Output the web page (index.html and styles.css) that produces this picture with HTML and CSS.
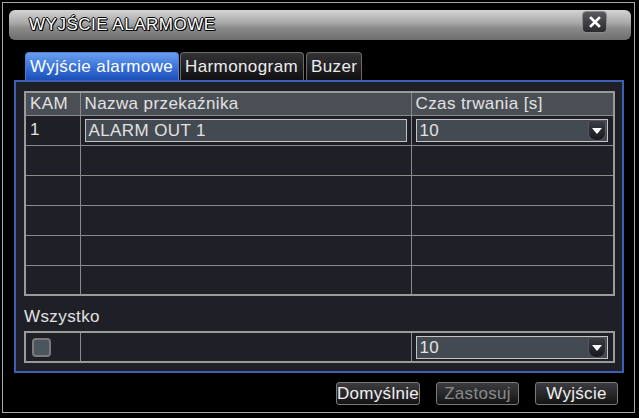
FILE: index.html
```html
<!DOCTYPE html>
<html lang="pl">
<head>
  <meta charset="UTF-8" />
  <title>Wyjście alarmowe</title>
  <link rel="stylesheet" href="styles.css">
</head>
<body>
  <div class="frame">
    <div class="titlebar">
      <span class="title">WYJŚCIE ALARMOWE</span>
      <button class="close">
        <svg width="12" height="12" viewBox="0 0 12 12"><path d="M2 2 L10 10 M10 2 L2 10" stroke="#fff" stroke-width="2.6" stroke-linecap="square"/></svg>
      </button>
    </div>

    <div class="tabs">
      <div class="tab active">Wyjście alarmowe</div>
      <div class="tab">Harmonogram</div>
      <div class="tab">Buzer</div>
    </div>

    <div class="panel">
      <table class="grid">
        <colgroup><col class="c1"><col class="c2"><col class="c3"></colgroup>
        <tr class="head"><th>KAM</th><th>Nazwa przekaźnika</th><th>Czas trwania [s]</th></tr>
        <tr>
          <td>1</td>
          <td><div class="field">ALARM OUT 1</div></td>
          <td><div class="select">10<span class="drop"></span></div></td>
        </tr>
        <tr><td></td><td></td><td></td></tr>
        <tr><td></td><td></td><td></td></tr>
        <tr><td></td><td></td><td></td></tr>
        <tr><td></td><td></td><td></td></tr>
        <tr><td></td><td></td><td></td></tr>
      </table>

      <div class="label">Wszystko</div>

      <table class="grid all">
        <colgroup><col class="c1"><col class="c2"><col class="c3"></colgroup>
        <tr>
          <td><span class="check"></span></td>
          <td></td>
          <td><div class="select">10<span class="drop"></span></div></td>
        </tr>
      </table>
    </div>

    <div class="buttons">
      <button class="btn">Domyślnie</button>
      <button class="btn disabled">Zastosuj</button>
      <button class="btn">Wyjście</button>
    </div>
  </div>
</body>
</html>
```

FILE: styles.css
```css
* { box-sizing: border-box; }
body {
  margin: 0;
  background: #000;
  color: #e2e2e2;
  font-family: "Liberation Sans", Arial, sans-serif;
  font-size: 17px;
  letter-spacing: 0.4px;
}
.frame {
  margin: 2px 0 0 2px;
  width: 633px;
  height: 411px;
  border: 1px solid #a8a8a8;
  padding: 7px 3px 0 6px;
}
.titlebar {
  height: 30px;
  border-radius: 6px;
  background: linear-gradient(#d4d4d4, #a6a6a6 45%, #8a8a8a 60%, #6e6e6e);
  display: flex;
  align-items: center;
  justify-content: space-between;
  padding: 0 24px 0 20px;
}
.title {
  color: #fff;
  letter-spacing: 0.5px;
  text-shadow: -1px 0 #000, 1px 0 #000, 0 -1px #000, 0 1px #000, 1px 1px #000;
}
.close {
  width: 25px;
  height: 22px;
  margin-top: -6px;
  border: 1px solid #8a8a8a;
  border-radius: 4px;
  background: linear-gradient(#5a5a5e, #2a2a2e);
  display: flex;
  align-items: center;
  justify-content: center;
  padding: 0;
}
.tabs {
  display: flex;
  gap: 1px;
  margin: 12px 0 0 16px;
  height: 28px;
}
.tab {
  height: 28px;
  padding: 4px 0 0 4px;
  border: 1px solid #6a6a6a;
  border-bottom: none;
  border-radius: 4px 4px 0 0;
  background: linear-gradient(#333336, #101012);
  color: #ededed;
}
.tab:nth-child(1) { width: 154px; }
.tab:nth-child(2) { width: 124px; }
.tab:nth-child(3) { width: 56px; margin-left: 1px; }
.tab.active {
  border-color: #4f7fd0;
  background: linear-gradient(#6aa0ee, #3a74da 50%, #1c4fb8);
  color: #fff;
}
.panel {
  margin-left: 5px;
  width: 610px;
  height: 293px;
  border: 2px solid #3b60b6;
  background: #1f2027;
  padding: 9px 0 0 8px;
}
.grid {
  width: 589px;
  table-layout: fixed;
  border-collapse: collapse;
  border: 2px solid #9a9a9a;
}
.grid col.c1 { width: 55px; }
.grid col.c2 { width: 331px; }
.grid col.c3 { width: 203px; }
.grid th, .grid td {
  border: 1px solid #8a8a8a;
  padding: 0 4px;
  height: 30px;
  text-align: left;
  font-weight: normal;
  white-space: nowrap;
}
.grid .head th {
  height: 23px;
  background: #4a4f55;
  padding-top: 0;
}
.field, .select {
  height: 23px;
  border: 1px solid #c4c4c4;
  background: #444a51;
  padding: 1px 0 0 3px;
}
.select {
  position: relative;
  margin-right: 1px;
}
.drop {
  position: absolute;
  right: 1px;
  top: 0;
  width: 18px;
  height: 21px;
  border-radius: 3px 3px 8px 8px;
  background: linear-gradient(#3a3c44, #18191e);
  border: 1px solid #55575e;
}
.drop::after {
  content: "";
  position: absolute;
  left: 3px;
  top: 7px;
  border-left: 5px solid transparent;
  border-right: 5px solid transparent;
  border-top: 6px solid #fff;
}
.label {
  height: 35px;
  padding-top: 11px;
}
.grid.all td { height: 30px; }
.check {
  display: block;
  width: 19px;
  height: 19px;
  margin-left: 2px;
  border: 2px solid #7a7a7a;
  border-radius: 4px;
  background: #4a555e;
}
.buttons {
  display: flex;
  justify-content: flex-end;
  gap: 16px;
  margin: 9px 13px 0 0;
}
.btn {
  height: 23px;
  width: 83px;
  padding: 0;
  border: 1px solid #7a7a7a;
  border-radius: 3px;
  background: linear-gradient(#3c3c40, #141416);
  color: #f0f0f0;
  font-family: "Liberation Sans", Arial, sans-serif;
  font-size: 17px;
  letter-spacing: 0.3px;
}
.btn:first-child { width: 84px; }
.btn.disabled { color: #8a8a8a; }
```
